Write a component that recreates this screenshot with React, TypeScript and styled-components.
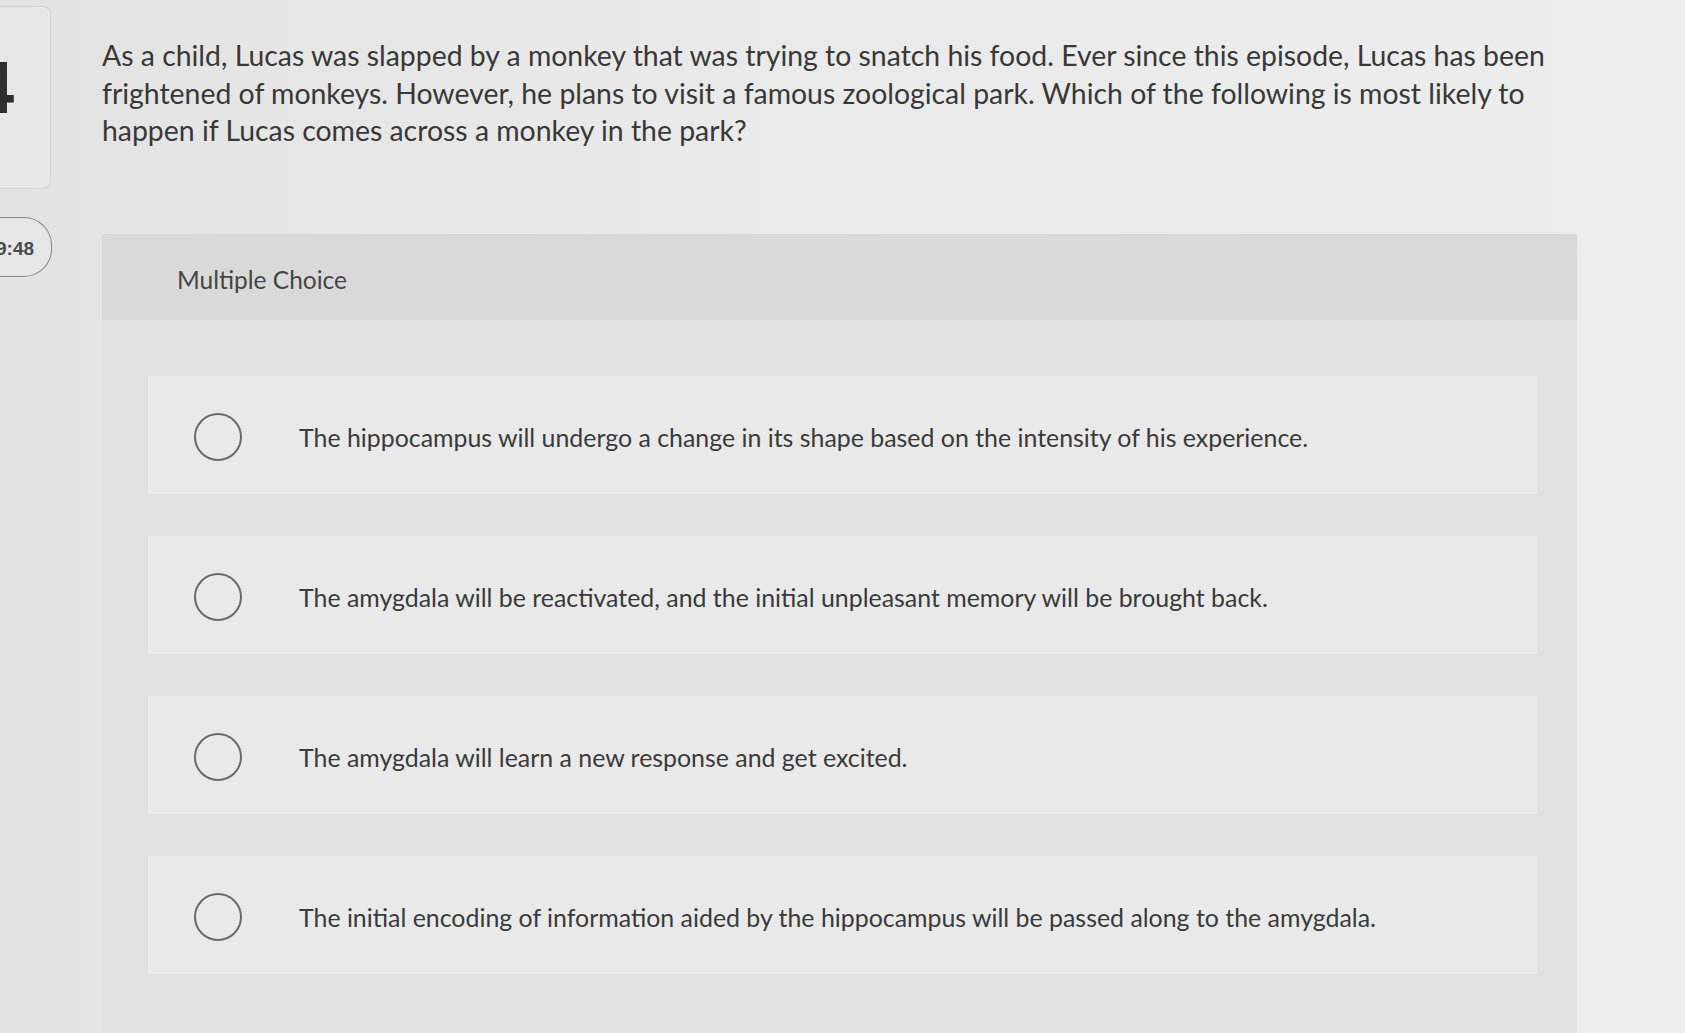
import React from "react";
import styled, { createGlobalStyle } from "styled-components";

const Global = createGlobalStyle`
  html, body { margin: 0; padding: 0; }
  body {
    background: linear-gradient(90deg, #e3e3e3 0%, #e9e9e9 40%, #ededed 100%);
    font-family: Lato, "Open Sans", "Liberation Sans", sans-serif;
    color: #3c3c3c;
  }
`;

const Page = styled.div`
  width: 1685px;
  height: 1033px;
  overflow: hidden;
  display: flex;
`;

const Rail = styled.div`
  width: 52px;
  flex: none;
  display: flex;
  flex-direction: column;
  padding-top: 6px;
`;

const NumberCard = styled.div`
  width: 51px;
  height: 183px;
  box-sizing: border-box;
  border: 1px solid #d4d4d4;
  border-left: none;
  border-radius: 0 8px 8px 0;
  background: #e7e7e7;
  overflow: hidden;
  display: flex;
  align-items: flex-start;
  padding-top: 44px;
`;

const NumberGlyph = styled.span`
  font-family: "Liberation Sans", sans-serif;
  font-size: 74px;
  line-height: 1;
  font-weight: 700;
  color: #2e2e2e;
  margin-left: -27px;
`;

const Timer = styled.div`
  margin-top: 28px;
  width: 52px;
  height: 60px;
  box-sizing: border-box;
  border: 1.5px solid #8a8a8a;
  border-left: none;
  border-radius: 0 28px 28px 0;
  background: #e6e6e6;
  display: flex;
  align-items: center;
  overflow: hidden;
  font-family: "Liberation Sans", sans-serif;
  font-weight: 700;
  font-size: 19px;
  color: #4a4a4a;
  padding-top: 3px;
`;

const TimerText = styled.span`
  margin-left: -4px;
`;

const Main = styled.div`
  flex: 1;
  padding-left: 50px;
  padding-top: 37px;
  display: flex;
  flex-direction: column;
`;

const Question = styled.p`
  margin: 0;
  width: 1480px;
  font-size: 28.4px;
  line-height: 37.6px;
  color: #383838;
`;

const Panel = styled.div`
  margin-top: 84px;
  width: 1475px;
  flex: 1;
  background: #e1e1e1;
  display: flex;
  flex-direction: column;
`;

const PanelHeader = styled.div`
  height: 86px;
  background: #d9d9d9;
  display: flex;
  align-items: center;
  padding-left: 75px;
  padding-top: 6px;
  box-sizing: border-box;
  font-size: 24.5px;
  color: #454545;
`;

const Options = styled.div`
  display: flex;
  flex-direction: column;
  gap: 42px;
  padding: 56px 40px 0 46px;
`;

const Option = styled.div`
  height: 118px;
  background: #e9e9e9;
  display: flex;
  align-items: center;
  padding-left: 46px;
  padding-top: 4px;
  box-sizing: border-box;
`;

const Radio = styled.span`
  width: 48px;
  height: 48px;
  box-sizing: border-box;
  border-radius: 50%;
  border: 2px solid #6a6a6a;
  flex: none;
`;

const OptionText = styled.span`
  margin-left: 57px;
  font-size: 24.9px;
  color: #3a3a3a;
`;

const options = [
  "The hippocampus will undergo a change in its shape based on the intensity of his experience.",
  "The amygdala will be reactivated, and the initial unpleasant memory will be brought back.",
  "The amygdala will learn a new response and get excited.",
  "The initial encoding of information aided by the hippocampus will be passed along to the amygdala.",
];

export default function App() {
  return (
    <>
      <Global />
      <Page>
        <Rail>
          <NumberCard>
            <NumberGlyph>4</NumberGlyph>
          </NumberCard>
          <Timer>
            <TimerText>9:48</TimerText>
          </Timer>
        </Rail>
        <Main>
          <Question>
            As a child, Lucas was slapped by a monkey that was trying to snatch his food. Ever since this episode, Lucas has been frightened of monkeys. However, he plans to visit a famous zoological park. Which of the following is most likely to happen if Lucas comes across a monkey in the park?
          </Question>
          <Panel>
            <PanelHeader>Multiple Choice</PanelHeader>
            <Options>
              {options.map((t) => (
                <Option key={t}>
                  <Radio />
                  <OptionText>{t}</OptionText>
                </Option>
              ))}
            </Options>
          </Panel>
        </Main>
      </Page>
    </>
  );
}
